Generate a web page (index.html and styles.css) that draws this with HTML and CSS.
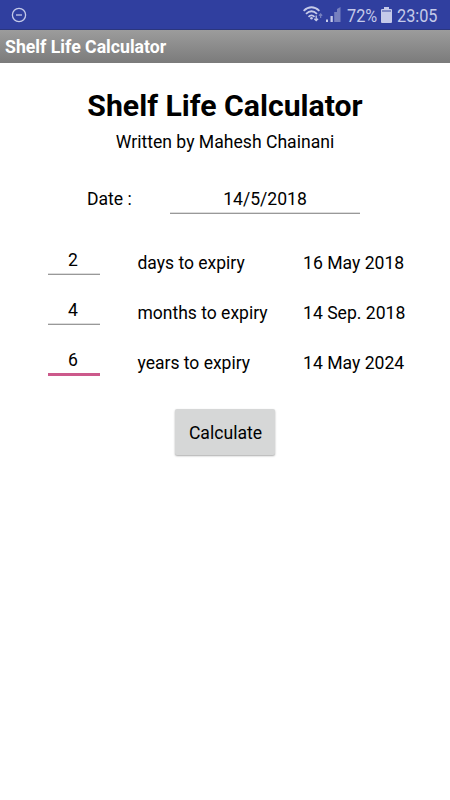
FILE: index.html
```html
<!DOCTYPE html>
<html lang="en">
<head>
<meta charset="utf-8">
<title>Shelf Life Calculator</title>
<link rel="stylesheet" href="styles.css">
</head>
<body>
<div class="status">
  <svg class="dnd" width="16" height="16" viewBox="0 0 16 16"><circle cx="8" cy="8" r="6.6"/><path d="M5 8h6"/></svg>
  <svg class="wifi" width="20" height="16" viewBox="0 0 20 16"><path class="arc" d="M.6 4.800Q8.500-2.200 16.400 4.800M3 7.900Q8.500 2.700 14 7.900M5.500 10.800Q8.500 7.900 11.500 10.800"/><circle class="fill" cx="8.500" cy="12.300" r="1.300"/><path class="arrow" d="M13.200 9.500v5M11.300 12.700l1.900 1.900 1.900-1.900"/><path class="arrow dim" d="M17.600 12V8M16 9.600l1.600-1.600 1.600 1.600"/></svg>
  <svg class="signal" width="15" height="15" viewBox="0 0 15 15"><path class="on" d="M0 12.500h2V15H0zM4.500 9h2.300v6H4.500z"/><path class="off" d="M8.200 5h2.800v10H8.200zM11 2L14.500 0v15H11z"/></svg>
  <span class="percent"><span class="narrow">72%</span></span>
  <svg class="battery" width="11" height="16" viewBox="0 0 11 16"><path d="M3 0h5v2H3zM1 2h9q1 0 1 1v12q0 1-1 1H1q-1 0-1-1V3q0-1 1-1z"/><path class="empty" d="M1 3h9v2H1z"/></svg>
  <span class="clock"><span class="narrow">23:05</span></span>
</div>
<header class="bar">Shelf Life Calculator</header>
<main>
  <h1>Shelf Life Calculator</h1>
  <p class="author">Written by Mahesh Chainani</p>
  <div class="date"><span class="date-label">Date :</span><div class="field">14/5/2018</div></div>
  <div class="row"><div class="field">2</div><span class="unit">days to expiry</span><span class="result">16 May 2018</span></div>
  <div class="row"><div class="field">4</div><span class="unit">months to expiry</span><span class="result">14 Sep. 2018</span></div>
  <div class="row"><div class="field active">6</div><span class="unit">years to expiry</span><span class="result">14 May 2024</span></div>
  <button>Calculate</button>
</main>
</body>
</html>
```
FILE: styles.css
```css
* { box-sizing: border-box; }
body { margin: 0; background: #fff; color: #000; font: 17.6px/24px Roboto, sans-serif; }
.status { height: 30px; background: #303f9f; border-bottom: 1px solid #2b367e; color: #c5cae9; display: flex; align-items: center; padding: 1px 12px 0 11px; }
.dnd { margin-right: auto; fill: none; stroke: #c5cae9; stroke-width: 1.3; }
.wifi { margin: 0 3px 2px 0; }
.arc { fill: none; stroke: #c5cae9; stroke-width: 1.8; }
.arrow { fill: none; stroke: #c5cae9; stroke-width: 1.3; }
.arrow.dim { stroke: #7680bf; }
.fill, .on, .battery { fill: #c5cae9; }
.off { fill: #7680bf; }
.empty { fill: #7f89c5; }
.signal { margin: 0 6px 1px 0; }
.percent { width: 30px; margin-right: 4px; }
.battery { margin: 0 5px 1px 0; }
.clock { width: 41px; }
.percent, .clock { padding-top: 2px; font-size: 19px; }
.narrow { display: inline-block; transform: scaleX(.855); transform-origin: left center; }
.bar { height: 33px; padding-left: 5px; background: linear-gradient(#9c9c9c, #7b7b7b); color: #fff; font-weight: 700; font-size: 17.700px; line-height: 35px; }
main { height: 737px; display: flex; flex-direction: column; }
h1 { margin: 25px 0 0; font-size: 30.2px; line-height: 36px; text-align: center; }
.author { margin: 6px 0 0; line-height: 25px; text-align: center; }
.date { display: flex; height: 32px; margin: 31px 0 30px; padding-left: 87px; }
.date-label { width: 83px; line-height: 27px; }
.field { text-align: center; border-bottom: 1.5px solid #999; line-height: 25px; }
.date .field { width: 190px; height: 28px; line-height: 27px; box-shadow: 0 -1px #ddd inset; }
.row { height: 50px; display: flex; padding-left: 48px; }
.row .field { width: 52px; height: 27px; padding-right: 2px; box-shadow: 0 -1px #ddd inset; }
.row .active { height: 28px; border-bottom: 3px solid #cc598b; box-shadow: none; }
.unit { width: 165.500px; margin-left: 37.500px; font-size: 17.500px; line-height: 30px; }
.result { line-height: 30px; }
button { width: 100px; height: 46px; margin: 11px 0 0 175px; padding: 1px 0 0 1px; border: 0; border-radius: 2px; background: #d6d7d7; color: #000; font: inherit; box-shadow: 0 1px 2px #aaa; }
```
